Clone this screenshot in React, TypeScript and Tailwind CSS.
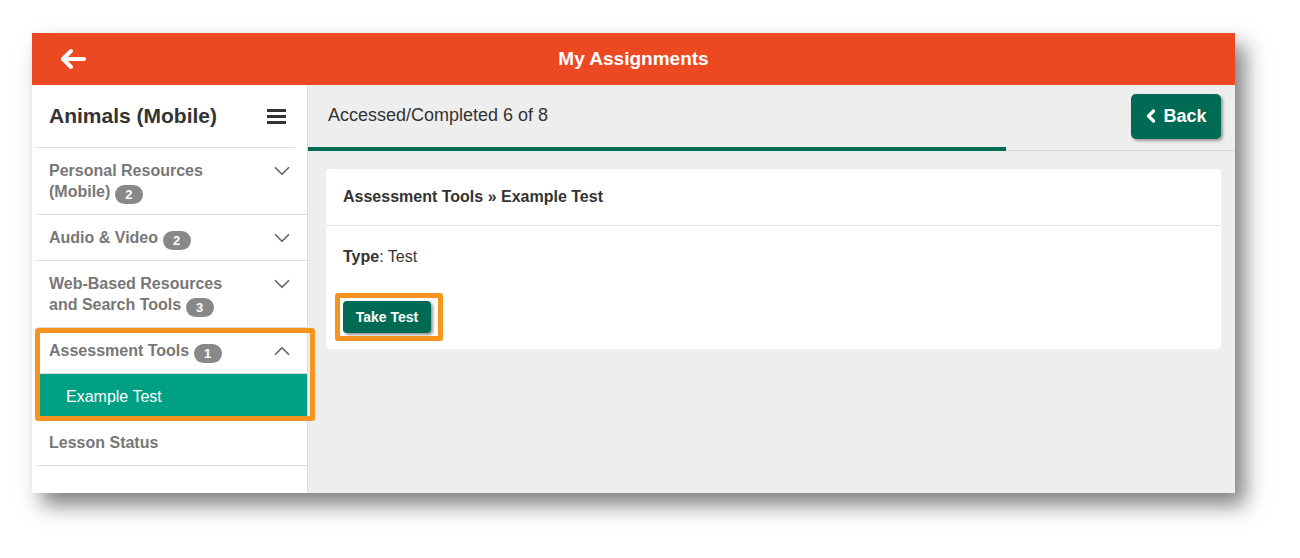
import { ChevronDown, ChevronUp, ChevronLeft } from 'lucide-react';

type NavItem = {
  label: string;
  count?: number;
  open?: boolean;
};

const navItems: NavItem[] = [
  { label: 'Personal Resources (Mobile)', count: 2 },
  { label: 'Audio & Video', count: 2 },
  { label: 'Web-Based Resources and Search Tools', count: 3 },
];

function Badge({ n }: { n: number }) {
  return (
    <span className="relative top-[2px] inline-flex h-[19px] min-w-[28px] items-center justify-center rounded-full bg-[#888888] px-[8px] align-bottom text-[13px] font-bold leading-none text-white">
      {n}
    </span>
  );
}

function SideRow({ item }: { item: NavItem }) {
  return (
    <div className="flex items-start border-b border-[#dddddd] py-3 pl-[12px] pr-[12px]">
      <div className="w-[200px] text-[16px] font-bold leading-[21px] text-[#777777]">
        {item.label} {item.count !== undefined && <Badge n={item.count} />}
      </div>
      <div className="ml-auto h-[21px] w-[26px] text-[#666666]">
        {item.open ? (
          <ChevronUp size={26} strokeWidth={1.6} className="-mt-[2px]" />
        ) : (
          <ChevronDown size={26} strokeWidth={1.6} className="-mt-[2px]" />
        )}
      </div>
    </div>
  );
}

function Sidebar() {
  return (
    <aside className="w-[276px] shrink-0 border-r border-[#dddddd] bg-white pl-[5px]">
      <div className="mr-[12px] flex h-[63px] items-center border-b border-[#dddddd] pl-[12px] pr-[9px]">
        <h1 className="text-[21px] font-bold text-[#333333]">Animals (Mobile)</h1>
        <div className="ml-auto flex w-[19px] flex-col gap-[3px]">
          <span className="h-[3px] bg-[#333333]" />
          <span className="h-[3px] bg-[#333333]" />
          <span className="h-[3px] bg-[#333333]" />
        </div>
      </div>
      {navItems.map((item) => (
        <SideRow key={item.label} item={item} />
      ))}
      <div className="relative">
        <SideRow item={{ label: 'Assessment Tools', count: 1, open: true }} />
        <div className="flex h-[46px] items-center bg-[#00a085] pl-[29px] text-[16px] text-white">
          Example Test
        </div>
        <div className="pointer-events-none absolute left-[-2px] top-0 h-[93px] w-[280px] rounded-[3px] border-[5px] border-[#f7941d]" />
      </div>
      <div className="flex h-[46px] items-center border-b border-[#dddddd] pl-[12px] text-[16px] font-bold text-[#777777]">
        Lesson Status
      </div>
    </aside>
  );
}

function App() {
  return (
    <div
      className="h-[558px] w-[1300px] overflow-hidden bg-white pl-[32px] pt-[33px]"
      style={{ fontFamily: '"Liberation Sans", Arial, sans-serif' }}
    >
      <div className="flex h-[460px] w-[1203px] flex-col shadow-[10px_12px_20px_rgba(0,0,0,0.5)]">
        <header className="relative flex h-[52px] shrink-0 items-center justify-center bg-[#ec4923]">
          <svg
            className="absolute left-[27px] top-[15px]"
            width="28"
            height="22"
            viewBox="0 0 28 22"
            fill="none"
            stroke="white"
            strokeWidth="4"
            strokeLinecap="round"
            strokeLinejoin="round"
          >
            <path d="M25 11H4" />
            <path d="M12 3L4 11L12 19" />
          </svg>
          <span className="text-[19px] font-bold text-white">My Assignments</span>
        </header>

        <div className="flex min-h-0 flex-1">
          <Sidebar />

          <main className="flex flex-1 flex-col bg-[#eeeeee]">
            <div className="relative flex h-[66px] shrink-0 items-center border-b border-[#d8d8d8] pl-[20px] pr-[14px]">
              <span className="pb-[4px] text-[18px] text-[#333333]">Accessed/Completed 6 of 8</span>
              <button className="mb-[3px] ml-auto flex h-[45px] w-[90px] items-center justify-center gap-[2px] rounded-[5px] bg-[#006b54] text-[18px] font-bold text-white shadow-[2px_2px_3px_rgba(0,0,0,0.35)]">
                <ChevronLeft size={20} strokeWidth={4} className="-ml-[4px]" />
                Back
              </button>
              <div className="absolute bottom-[-1px] left-0 h-[4px] w-[698px] bg-[#006b54]" />
            </div>

            <div className="pl-[18px] pr-[14px] pt-[18px]">
              <section className="h-[180px] rounded-[4px] bg-white">
                <div className="flex h-[57px] items-center border-b border-[#e0e0e0] pl-[17px] text-[16px] font-bold text-[#333333]">
                  Assessment Tools » Example Test
                </div>
                <div className="pl-[17px] pt-[19px] text-[16px] text-[#333333]">
                  <span className="font-bold">Type</span>: Test
                </div>
                <div className="relative ml-[17px] mt-[32px] w-[88px]">
                  <button className="flex h-[32px] w-[88px] items-center justify-center rounded-[4px] bg-[#006b54] text-[14px] font-bold text-white shadow-[2px_2px_3px_rgba(0,0,0,0.4)]">
                    Take Test
                  </button>
                  <div className="pointer-events-none absolute left-[-8px] top-[-8px] h-[48px] w-[108px] rounded-[3px] border-[5px] border-[#f7941d]" />
                </div>
              </section>
            </div>
          </main>
        </div>
      </div>
    </div>
  );
}

export default App;
